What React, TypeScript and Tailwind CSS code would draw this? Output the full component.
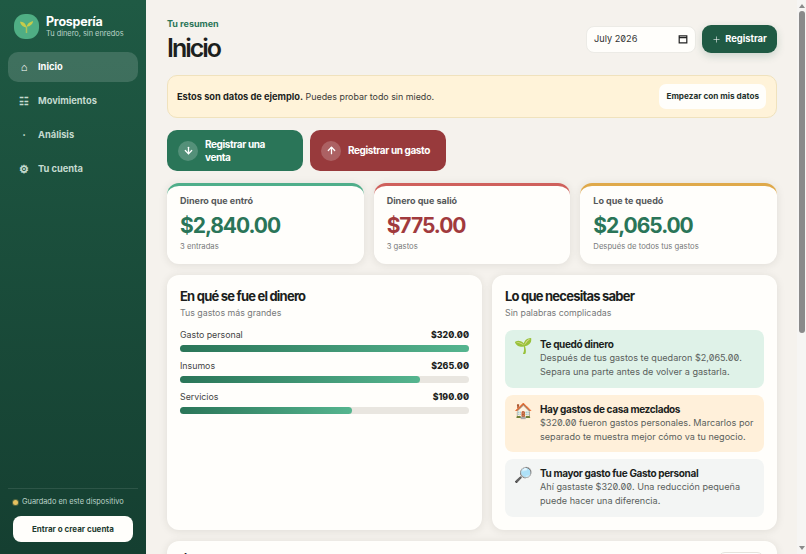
import { ArrowDown, ArrowUp, Plus } from "lucide-react";

const head = "font-bold tracking-[-0.06em]";

const nav = [
  { icon: "⌂", label: "Inicio", active: true },
  { icon: "☷", label: "Movimientos" },
  { icon: "·", label: "Análisis" },
  { icon: "⚙", label: "Tu cuenta" },
];

const stats = [
  { label: "Dinero que entró", value: "$2,840.00", note: "3 entradas", bar: "border-t-[#4fae8a]", color: "text-[#2a7558]" },
  { label: "Dinero que salió", value: "$775.00", note: "3 gastos", bar: "border-t-[#cf605c]", color: "text-[#a13a3d]" },
  { label: "Lo que te quedó", value: "$2,065.00", note: "Después de todos tus gastos", bar: "border-t-[#dfa94a]", color: "text-[#2a7558]" },
];

const bars = [
  { label: "Gasto personal", value: "$320.00", width: 100 },
  { label: "Insumos", value: "$265.00", width: 83 },
  { label: "Servicios", value: "$190.00", width: 59.4 },
];

const tips = [
  { icon: "🌱", title: "Te quedó dinero", a: "Después de tus gastos te quedaron ", v: "$2,065.00", b: ".", l2: "Separa una parte antes de volver a gastarla.", bg: "bg-[#dff2e8]" },
  { icon: "🏠", title: "Hay gastos de casa mezclados", a: "", v: "$320.00", b: " fueron gastos personales. Marcarlos por", l2: "separado te muestra mejor cómo va tu negocio.", bg: "bg-[#fff0da]" },
  { icon: "🔎", title: "Tu mayor gasto fue Gasto personal", a: "Ahí gastaste ", v: "$320.00", b: ". Una reducción pequeña", l2: "puede hacer una diferencia.", bg: "bg-[#f3f5f4]" },
];

const card = "rounded-[12px] bg-[#fffefb] shadow-[0_1px_8px_rgba(40,40,30,0.1)]";

export default function App() {
  return (
    <div className="relative flex h-screen overflow-hidden bg-[#f5f2ed] font-['Inter','Noto_Sans',sans-serif] text-[#1c1f1d]">
      <aside className="flex w-[146px] shrink-0 flex-col bg-gradient-to-b from-[#1f5a44] to-[#153f31] px-2 pb-3">
        <div className="flex h-[52px] items-center gap-[7px] px-[6px] pt-[1px]">
          <div className="flex h-[25px] w-[25px] items-center justify-center rounded-[45%] bg-[#4fae84]">
            <svg width="15" height="15" viewBox="0 0 16 16">
              <path d="M8 15V8" stroke="#a9c35a" strokeWidth="1.6" fill="none" />
              <path d="M8 9C5 9 2 7 1 3c3 0 6 1 7 6zM8 8c1-3 3-5 7-6 0 3-3 6-7 6z" fill="#c6cc4b" />
            </svg>
          </div>
          <div>
            <div className="text-[12.5px] leading-[15px] font-bold tracking-[-0.02em] text-white">Prospería</div>
            <div className="text-[7.4px] leading-[10px] whitespace-nowrap text-[#bcd4c9]">Tu dinero, sin enredos</div>
          </div>
        </div>
        <nav className="flex flex-col gap-1">
          {nav.map((n) => (
            <div key={n.label} className={`flex h-[30px] items-center gap-[9px] rounded-[10px] px-[11px] text-[9.3px] font-bold ${n.active ? "bg-white/15 text-white" : "text-[#c5dbd0]"}`}>
              <span className="w-[10px] text-center text-[11px] font-bold">{n.icon}</span>
              {n.label}
            </div>
          ))}
        </nav>
        <div className="mt-auto border-t border-white/10 px-[5px] pt-[7px]">
          <div className="flex items-center gap-[4px] text-[7.4px] leading-[12px] whitespace-nowrap text-[#bcd4c9]">
            <span className="h-[5px] w-[5px] rounded-full bg-[#e5c15f] shadow-[0_0_0_1px_rgba(229,193,95,0.3)]" />
            Guardado en este dispositivo
          </div>
          <button className="mt-[8px] h-[26px] w-full rounded-[8px] bg-[#fffefb] text-[8px] font-bold text-[#1f3b30]">Entrar o crear cuenta</button>
        </div>
      </aside>

      <main className="flex-1 overflow-y-scroll pt-[18px] pr-[29px] pb-[21px] pl-[21px] [scrollbar-width:none]">
        <header className="flex items-start justify-between">
          <div>
            <div className="text-[9px] leading-[12px] font-bold text-[#2a7558]">Tu resumen</div>
            <h1 className="mt-[3px] text-[25px] leading-[31px] font-semibold tracking-[-0.08em]">Inicio</h1>
          </div>
          <div className="mt-[7px] flex items-center gap-[6px]">
            <div className="flex h-[27px] w-[110px] items-center justify-between rounded-[8px] border border-[#ecebe6] bg-[#fffefb] px-[7px] text-[9.2px] text-[#333] slashed-zero">
              July 2026
              <svg width="10" height="10" viewBox="0 0 10 10"><path d="M1.2 1.8h7.6v7H1.2zM1.2 3.6h7.6" fill="none" stroke="#222" strokeWidth="1.2" /></svg>
            </div>
            <button className="flex h-[28px] w-[75px] items-center justify-center gap-[4px] rounded-[9px] bg-[#1f5a44] text-[9.4px] font-bold text-white shadow-[0_3px_8px_rgba(31,90,68,0.2)]">
              <Plus size={9} strokeWidth={1.5} />
              Registrar
            </button>
          </div>
        </header>

        <section className="mt-[11px] flex h-[43px] items-center justify-between rounded-[10px] border border-[#f0e2bd] bg-[#fff3d9] pr-[10px] pl-[9px] text-[8.9px] text-[#3b3b38]">
          <p><b className="text-[9.25px] font-bold text-[#1c1f1d]">Estos son datos de ejemplo.</b> Puedes probar todo sin miedo.</p>
          <button className="h-[25px] rounded-[7px] bg-[#fffefb] px-[7px] text-[8.2px] font-bold text-[#26332d]">Empezar con mis datos</button>
        </section>

        <section className="mt-[12px] flex gap-[7px]">
          <button className="flex h-[41px] w-[136px] items-center gap-[7px] rounded-[10px] bg-[#2a7558] pr-[30px] pl-[11px] text-left text-[10px] leading-[13px] font-bold tracking-[-0.04em] text-white">
            <span className="flex h-[20px] w-[20px] shrink-0 items-center justify-center rounded-full bg-white/20"><ArrowDown size={11} strokeWidth={2.75} /></span>
            <span>Registrar una venta</span>
          </button>
          <button className="flex h-[41px] w-[136px] items-center gap-[7px] rounded-[10px] bg-[#983a3c] pr-[10px] pl-[11px] text-left text-[10px] leading-[13px] font-bold tracking-[-0.04em] text-white">
            <span className="flex h-[20px] w-[20px] shrink-0 items-center justify-center rounded-full bg-white/20"><ArrowUp size={11} strokeWidth={2.75} /></span>
            <span>Registrar un gasto</span>
          </button>
        </section>

        <section className="mt-[12px] grid grid-cols-3 gap-[10px]">
          {stats.map((s) => (
            <div key={s.label} className={`h-[81px] border-t-[3px] px-[13px] pt-[9px] ${card} ${s.bar}`}>
              <div className="text-[9px] leading-[12px] font-bold text-[#55585a]">{s.label}</div>
              <div className={`mt-[6px] text-[21px] leading-[26px] font-bold tracking-[-0.05em] ${s.color}`}>{s.value}</div>
              <div className="mt-[2px] text-[7.7px] leading-[11px] text-[#77797a]">{s.note}</div>
            </div>
          ))}
        </section>

        <section className="mt-[11px] grid grid-cols-[315px_1fr] gap-[10px]">
          <div className={`h-[255px] px-[13px] pt-[12px] ${card}`}>
            <h2 className={`text-[13px] leading-[18px] ${head}`}>En qué se fue el dinero</h2>
            <p className="mt-[2px] text-[8.8px] leading-[12px] text-[#77797a]">Tus gastos más grandes</p>
            <div className="mt-[9px] flex flex-col gap-[7px]">
              {bars.map((b) => (
                <div key={b.label}>
                  <div className="flex items-center justify-between text-[8.8px] leading-[14px] text-[#444]">
                    <span>{b.label}</span>
                    <b className="font-extrabold text-[#1c1f1d] slashed-zero">{b.value}</b>
                  </div>
                  <div className="mt-[3px] h-[7px] rounded-full bg-[#e9e6e0]">
                    <div className="h-full rounded-full bg-gradient-to-r from-[#2a7558] to-[#55b58f]" style={{ width: `${b.width}%` }} />
                  </div>
                </div>
              ))}
            </div>
          </div>

          <div className={`h-[255px] px-[13px] pt-[12px] ${card}`}>
            <h2 className={`text-[13px] leading-[18px] ${head}`}>Lo que necesitas saber</h2>
            <p className="mt-[2px] text-[8.8px] leading-[12px] text-[#77797a]">Sin palabras complicadas</p>
            <div className="mt-[11px] flex flex-col gap-[7px]">
              {tips.map((t) => (
                <div key={t.title} className={`flex h-[57.5px] gap-[10px] rounded-[8px] px-[9px] pt-[7px] ${t.bg}`}>
                  <span className="w-[16px] shrink-0 text-[15px] leading-[18px]">{t.icon}</span>
                  <div>
                    <div className="text-[10px] leading-[14px] font-bold tracking-[-0.035em] text-[#1c1f1d]">{t.title}</div>
                    <div className="text-[9.1px] leading-[14px] whitespace-nowrap text-[#5a5f5c]">{t.a}<span className="slashed-zero">{t.v}</span>{t.b}<br />{t.l2}</div>
                  </div>
                </div>
              ))}
            </div>
          </div>
        </section>

        <section className={`mt-[11px] flex h-[240px] items-start justify-between px-[13px] pt-[11px] ${card}`}>
          <h2 className={`text-[13px] leading-[18px] ${head}`}>Últimos movimientos</h2>
          <button className="h-[24px] w-[46px] rounded-[7px] border border-[#e6e3dd] bg-white text-[8.2px] font-bold">Ver todo</button>
        </section>
      </main>

      <div className="absolute top-0 right-0 bottom-0 flex w-[9px] flex-col items-center bg-[#f6f5f3]">
        <div className="mt-[4px] h-0 w-0 border-x-[3px] border-b-[4px] border-x-transparent border-b-[#8a8a8a]" />
        <div className="mt-[3px] h-[322px] w-[6px] rounded-full bg-[#8a8a8a]" />
        <div className="mt-auto mb-[4px] h-0 w-0 border-x-[3px] border-t-[4px] border-x-transparent border-t-[#8a8a8a]" />
      </div>
    </div>
  );
}
